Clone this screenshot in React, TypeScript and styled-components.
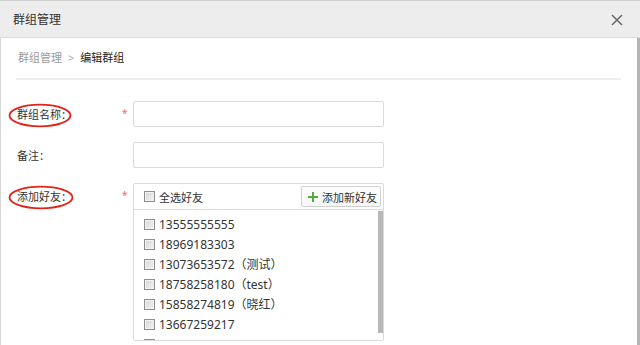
import React from "react";
import styled, { createGlobalStyle } from "styled-components";

const Global = createGlobalStyle`
  html, body { margin: 0; padding: 0; background: #fff; }
  body { font-family: "Noto Sans", "Noto Sans CJK SC", sans-serif; font-size: 12px; color: #333; }
  * { box-sizing: border-box; }
`;

const Dialog = styled.div`
  width: 640px;
  height: 345px;
  display: flex;
  flex-direction: column;
  overflow: hidden;
  background: #fff;
`;

const Header = styled.div`
  height: 38px;
  flex: none;
  display: flex;
  align-items: center;
  justify-content: space-between;
  padding: 1px 16px 0 13px;
  background: #ededed;
  border-top: 1px solid #cfcfcf;
  border-bottom: 1px solid #dcdcdc;
`;

const Title = styled.div`
  font-size: 12px;
  color: #333;
  line-height: 1;
`;

const Close = styled.div`
  width: 14px;
  height: 14px;
  display: flex;
  align-items: center;
  justify-content: center;
`;

const Body = styled.div`
  flex: 1;
  border-left: 1px solid #d6d6d6;
  border-right: 3px solid #b4b4b4;
  padding: 0 16px 0 15px;
  overflow: hidden;
`;

const Crumbs = styled.div`
  height: 42px;
  display: flex;
  align-items: center;
  gap: 6px;
  padding: 0 0 2px 2px;
  border-bottom: 2px solid #eeeeee;
  font-size: 11px;
`;

const CrumbLink = styled.span`
  color: #9a9a9a;
`;

const CrumbSep = styled.span`
  color: #aaa;
  font-size: 11px;
`;

const CrumbCur = styled.span`
  color: #222;
`;

const Form = styled.div`
  display: grid;
  grid-template-columns: 104px 13px 251px;
  row-gap: 15px;
  margin-top: 21px;
  align-items: start;
`;

const Label = styled.div`
  position: relative;
  line-height: 24px;
  padding: 2px 0 0 1px;
  color: #333;
  font-size: 11px;
  white-space: nowrap;
`;

const Colon = styled.span`
  margin-left: 1px;
  font-size: 12px;
`;

const Circle = styled.svg`
  position: absolute;
  left: -8px;
  top: 2px;
  pointer-events: none;
`;

const Star = styled.div<{ $show: boolean }>`
  color: #f06a6a;
  font-size: 10px;
  line-height: 24px;
  padding-left: 2px;
  visibility: ${(p) => (p.$show ? "visible" : "hidden")};
`;

const Input = styled.input`
  display: block;
  width: 251px;
  height: 26px;
  border: 1px solid #dadada;
  border-radius: 2px;
  outline: none;
  background: #fff;
`;

const FriendBox = styled.div`
  position: relative;
  width: 251px;
  height: 158px;
  border: 1px solid #dadada;
  border-radius: 2px;
  overflow: hidden;
`;

const BoxHead = styled.div`
  height: 26px;
  display: flex;
  align-items: center;
  justify-content: space-between;
  padding: 0 2px 0 10px;
  border-bottom: 1px solid #dedede;
`;

const CheckRow = styled.label<{ $small?: boolean }>`
  display: flex;
  align-items: center;
  gap: 4px;
  height: 20px;
  color: #333;
  font-size: ${(p) => (p.$small ? "11px" : "12px")};
  white-space: nowrap;
`;

const Box = styled.span`
  width: 11px;
  height: 11px;
  flex: none;
  border: 1px solid #8e8e8e;
  background: linear-gradient(135deg, #d6d6d6, #f4f4f4);
  box-shadow: inset 0 0 0 1px #f2f2f2;
`;

const AddBtn = styled.button`
  height: 21px;
  display: flex;
  align-items: center;
  gap: 4px;
  padding: 0 3px 0 6px;
  border: 1px solid #cfcfcf;
  border-radius: 2px;
  background: linear-gradient(#fff, #f7f7f7);
  font-family: "Noto Sans", "Noto Sans CJK SC", sans-serif;
  font-size: 11px;
  color: #333;
`;

const List = styled.div`
  padding: 4px 0 0 10px;
`;

const Thumb = styled.div`
  position: absolute;
  right: 0;
  top: 27px;
  width: 5px;
  height: 122px;
  background: #b8b8b8;
`;

const friends = [
  "13555555555",
  "18969183303",
  "13073653572（测试）",
  "18758258180（test）",
  "15858274819（晓红）",
  "13667259217",
  "18368107597",
];

const Ellipse = ({ w }: { w: number }) => (
  <Circle width={w} height={25} viewBox={`0 0 ${w} 25`}>
    <ellipse
      cx={w / 2}
      cy={12.5}
      rx={w / 2 - 1.5}
      ry={10.8}
      fill="none"
      stroke="#e2231a"
      strokeWidth={1.8}
    />
  </Circle>
);

export default function App() {
  return (
    <>
      <Global />
      <Dialog>
        <Header>
          <Title>群组管理</Title>
          <Close>
            <svg width="12" height="12" viewBox="0 0 12 12">
              <path d="M1 1 L11 11 M11 1 L1 11" stroke="#6a6a6a" strokeWidth="1.5" />
            </svg>
          </Close>
        </Header>
        <Body>
          <Crumbs>
            <CrumbLink>群组管理</CrumbLink>
            <CrumbSep>&gt;</CrumbSep>
            <CrumbCur>编辑群组</CrumbCur>
          </Crumbs>
          <Form>
            <Label>
              <Ellipse w={64} />
              群组名称<Colon>:</Colon>
            </Label>
            <Star $show>*</Star>
            <Input />

            <Label>
              备注<Colon>:</Colon>
            </Label>
            <Star $show={false}>*</Star>
            <Input />

            <Label>
              <Ellipse w={66} />
              添加好友<Colon>:</Colon>
            </Label>
            <Star $show>*</Star>
            <FriendBox>
              <BoxHead>
                <CheckRow $small>
                  <Box />
                  全选好友
                </CheckRow>
                <AddBtn>
                  <svg width="10" height="10" viewBox="0 0 10 10">
                    <path d="M5 0 V10 M0 5 H10" stroke="#4fae3a" strokeWidth="2" />
                  </svg>
                  添加新好友
                </AddBtn>
              </BoxHead>
              <List>
                {friends.map((f) => (
                  <CheckRow key={f}>
                    <Box />
                    {f}
                  </CheckRow>
                ))}
              </List>
              <Thumb />
            </FriendBox>
          </Form>
        </Body>
      </Dialog>
    </>
  );
}
